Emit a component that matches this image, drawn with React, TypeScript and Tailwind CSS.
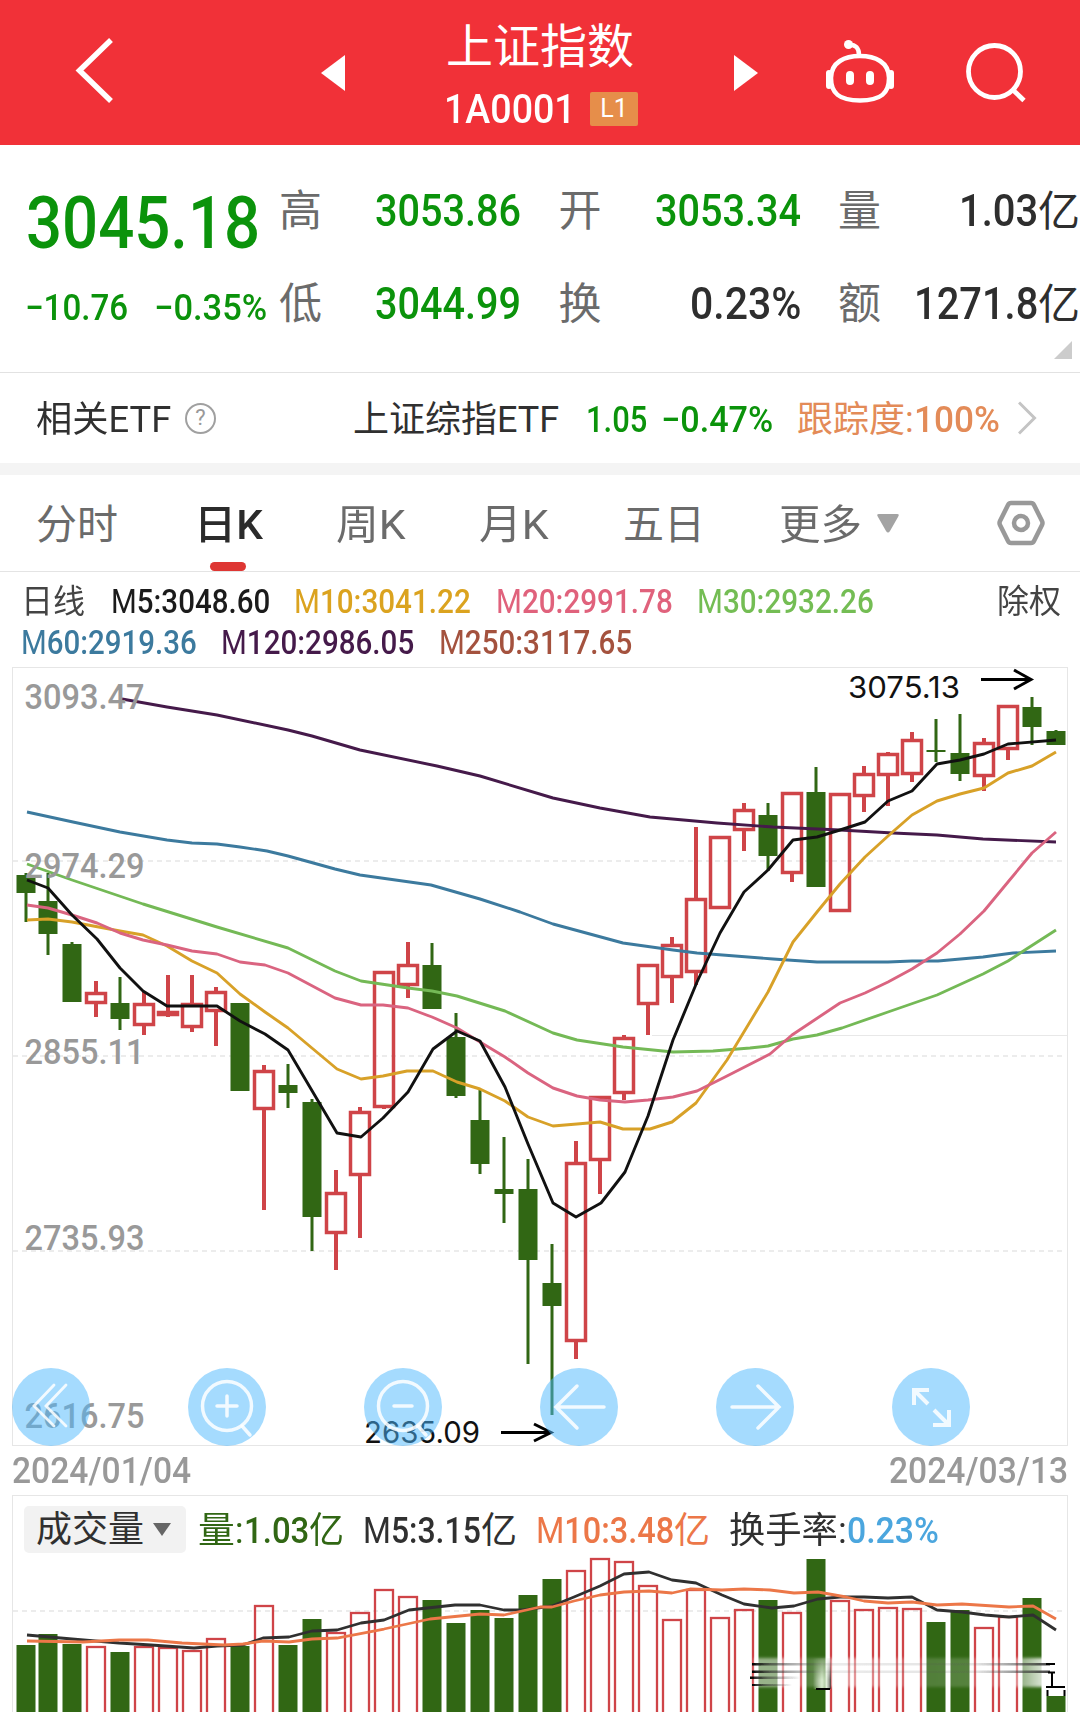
import { useLayoutEffect, useRef, type ReactNode } from "react";

/** Text run condensed or stretched horizontally to occupy exactly `w` pixels. */
function Fit({ w, className = "", children }: { w: number; className?: string; children: ReactNode }) {
  const inner = useRef<HTMLSpanElement>(null);
  useLayoutEffect(() => {
    const el = inner.current;
    if (!el) return;
    el.style.transform = "none";
    el.style.transform = `scaleX(${w / el.offsetWidth})`;
  }, [w]);
  return (
    <span className={`inline-block shrink-0 whitespace-nowrap ${className}`} style={{ width: w }}>
      <span ref={inner} className="inline-block origin-left">
        {children}
      </span>
    </span>
  );
}

type Candle = [high: number, top: number, bottom: number, low: number, up: 0 | 1];

const candles: Candle[] = [
  [873, 875, 893, 922, 0], [873, 901, 934, 955, 0], [942, 944, 1002, 1002, 0], [981, 992, 1004, 1017, 1],
  [977, 1003, 1019, 1030, 0], [992, 1003, 1026, 1035, 1], [975, 1011, 1016, 1017, 1], [975, 1003, 1028, 1032, 1],
  [987, 991, 1012, 1046, 1], [1003, 1003, 1091, 1091, 0], [1065, 1070, 1110, 1210, 1], [1064, 1085, 1093, 1108, 0],
  [1099, 1102, 1217, 1251, 0], [1170, 1192, 1234, 1270, 1], [1107, 1111, 1176, 1238, 1], [971, 971, 1108, 1109, 1],
  [942, 964, 986, 998, 1], [943, 965, 1009, 1009, 0], [1013, 1037, 1096, 1098, 0], [1089, 1120, 1164, 1174, 0],
  [1137, 1189, 1194, 1223, 0], [1159, 1189, 1260, 1364, 0], [1244, 1283, 1306, 1415, 0], [1141, 1162, 1342, 1359, 1],
  [1096, 1096, 1161, 1194, 1], [1035, 1037, 1094, 1100, 1], [964, 964, 1005, 1035, 1], [937, 944, 978, 1003, 1],
  [827, 898, 973, 985, 1], [836, 836, 909, 909, 1], [803, 809, 831, 851, 1], [803, 815, 856, 871, 0],
  [792, 792, 874, 882, 1], [767, 792, 887, 887, 0], [793, 793, 912, 912, 1], [766, 773, 797, 812, 1],
  [752, 753, 776, 806, 1], [732, 739, 775, 782, 1], [719, 750, 752, 762, 0], [714, 753, 774, 781, 0],
  [738, 742, 777, 791, 1], [705, 705, 750, 760, 1], [697, 707, 727, 745, 0], [730, 731, 745, 745, 0],
];

const volumeTops = [
  1645, 1634, 1644, 1646, 1652, 1646, 1647, 1650, 1638, 1646, 1605, 1645, 1619, 1632, 1612, 1589, 1596, 1600, 1623,
  1610, 1618, 1595, 1579, 1570, 1558, 1561, 1585, 1619, 1589, 1617, 1609, 1600, 1612, 1559, 1600, 1609, 1607, 1608,
  1622, 1610, 1627, 1616, 1598, 1696,
];

const averages = [
  { color: "#3c7a9e", points: "27,812 73,822 120,832 167,840 192,843 217,844 240,847 267,851 288,856 335,869 360,875 431,885 480,899 520,912 553,924 623,943 673,950 697,953 773,959 817,962 888,962 912,961 938,961 983,957 1013,953 1056,951" },
  { color: "#451a4a", points: "122,699 167,707 217,715 288,730 312,736 360,750 437,766 480,776 553,798 600,808 650,817 717,823 773,827 840,830 893,833 937,835 983,839 1056,842" },
  { color: "#74b956", points: "27,864 72,880 143,904 217,927 288,948 335,971 361,981 408,988 432,991 457,996 505,1011 553,1033 577,1040 623,1047 673,1052 713,1051 750,1048 768,1046 793,1039 817,1035 842,1028 888,1012 937,995 983,974 1008,961 1056,930" },
  { color: "#d8a128", points: "27,920 48,919 72,922 120,931 143,935 167,946 192,961 217,973 240,994 265,1012 288,1028 337,1069 361,1079 383,1076 407,1071 433,1071 457,1082 480,1089 505,1101 528,1117 553,1126 577,1124 600,1122 623,1129 650,1129 672,1122 696,1103 727,1060 768,992 793,942 817,912 840,884 865,857 888,836 912,815 937,801 960,794 984,788 1008,773 1032,766 1056,752" },
  { color: "#da6480", points: "27,905 48,908 72,915 97,923 120,933 143,940 167,945 192,951 217,954 240,962 265,965 288,973 335,998 361,1005 383,1005 408,1008 432,1017 457,1028 480,1042 505,1057 528,1073 553,1088 577,1096 600,1100 625,1102 648,1100 673,1097 697,1091 725,1077 770,1054 792,1035 840,1003 865,993 888,982 912,969 937,953 960,934 984,911 1008,882 1032,853 1056,832" },
  { color: "#111111", points: "27,880 48,888 72,915 97,939 120,968 143,991 167,1006 217,1006 240,1021 265,1034 288,1050 337,1133 361,1137 383,1118 408,1092 433,1049 457,1031 480,1041 505,1087 528,1144 553,1203 576,1217 601,1203 625,1172 648,1116 673,1040 697,982 720,933 744,892 768,870 793,840 817,837 840,830 865,822 888,801 912,791 937,764 960,760 984,754 1008,744 1056,740" },
];

const priceLabels = [
  { y: 709, text: "3093.47" },
  { y: 878, text: "2974.29" },
  { y: 1064, text: "2855.11" },
  { y: 1250, text: "2735.93" },
  { y: 1428, text: "2616.75" },
];

const RED = "#cf4448";
const GREEN = "#316714";
const candleX = (i: number) => (i === 0 ? 26 : 24 + i * 24);

function PriceChart() {
  return (
    <svg className="block h-[777px] w-[1054px] overflow-visible" viewBox="13 668 1054 777">
      {[861, 1056, 1251].map((y) => (
        <line key={y} x1="13" x2="1066" y1={y} y2={y} stroke="#e6e6e6" strokeWidth="1.5" strokeDasharray="5 4" />
      ))}
      <line x1="652" x2="1067" y1="1035.5" y2="1035.5" stroke="#e8e8e8" />
      {candles.map(([high, top, bottom, low, up], i) => {
        const x = candleX(i);
        const flat = bottom - top < 6;
        return up ? (
          <g key={i} stroke={RED}>
            <path d={`M${x} ${high}V${top + 1}M${x} ${bottom - 1}V${low}`} strokeWidth="4" />
            <rect x={x - 9.5} y={top + 1.5} width="19" height={bottom - top - 3} fill={flat ? RED : "none"} strokeWidth="3.5" />
          </g>
        ) : (
          <g key={i} fill={GREEN}>
            <rect x={x - 1.5} y={high} width="3" height={low - high} />
            <rect x={x - 9.5} y={top} width="19" height={bottom - top} />
          </g>
        );
      })}
      {averages.map((line) => (
        <polyline key={line.color} points={line.points} fill="none" stroke={line.color} strokeWidth="2.9" strokeLinejoin="round" />
      ))}
      <g className="font-['Roboto']" fontSize="35.5" fontWeight="500" fill="#999999">
        {priceLabels.map((label) => (
          <text key={label.y} x="24.5" y={label.y} textLength="120" lengthAdjust="spacingAndGlyphs">
            {label.text}
          </text>
        ))}
      </g>
      <g className="font-['Inter']" fontSize="30" fill="#111111">
        <text x="848" y="698" textLength="112" lengthAdjust="spacingAndGlyphs">3075.13</text>
        <text x="364" y="1443" textLength="116" lengthAdjust="spacingAndGlyphs">2635.09</text>
      </g>
      <g fill="none" stroke="#000000" strokeWidth="3">
        <path d="M981 679.500H1030M1014 670L1031 679.500L1014 689" />
        <path d="M501 1432.500H551M534 1424L551 1432.500L534 1441" />
      </g>
    </svg>
  );
}

function VolumeChart() {
  return (
    <svg className="block h-[155px] w-[1054px]" viewBox="13 1557 1054 155">
      <defs>
        <linearGradient id="haze" x1="0" x2="1" y1="0" y2="0">
          <stop offset="0" stopColor="#fff" stopOpacity="0.5" />
          <stop offset="0.1" stopColor="#fff" stopOpacity="0.5" />
          <stop offset="0.18" stopColor="#fff" stopOpacity="0.15" />
          <stop offset="0.3" stopColor="#fff" stopOpacity="0.5" />
          <stop offset="0.55" stopColor="#fff" stopOpacity="0.15" />
          <stop offset="0.86" stopColor="#fff" stopOpacity="0.2" />
          <stop offset="1" stopColor="#fff" stopOpacity="0.85" />
        </linearGradient>
        <linearGradient id="streak" x1="0" x2="1" y1="0" y2="0">
          <stop offset="0" stopColor="#000" stopOpacity="1" />
          <stop offset="0.06" stopColor="#222" stopOpacity="0.6" />
          <stop offset="0.25" stopColor="#555" stopOpacity="0.12" />
          <stop offset="0.75" stopColor="#555" stopOpacity="0.15" />
          <stop offset="1" stopColor="#222" stopOpacity="0.85" />
        </linearGradient>
        <linearGradient id="streakShort" x1="0" x2="1" y1="0" y2="0">
          <stop offset="0" stopColor="#000" stopOpacity="1" />
          <stop offset="0.35" stopColor="#222" stopOpacity="0.5" />
          <stop offset="1" stopColor="#222" stopOpacity="0" />
        </linearGradient>
        <linearGradient id="glow" x1="0" x2="1" y1="0" y2="0">
          <stop offset="0" stopColor="#fff" stopOpacity="0" />
          <stop offset="0.5" stopColor="#e3f3da" stopOpacity="0.9" />
          <stop offset="0.75" stopColor="#c9e0bd" stopOpacity="0.6" />
          <stop offset="1" stopColor="#222" stopOpacity="0.75" />
        </linearGradient>
        <linearGradient id="fade" x1="0" x2="0" y1="0" y2="1">
          <stop offset="0" stopColor="#000" />
          <stop offset="0.7" stopColor="#fff" />
        </linearGradient>
        <mask id="fadeIn">
          <rect x="805" y="1656" width="35" height="34" fill="url(#fade)" />
        </mask>
        <filter id="soft" x="-5%" y="-30%" width="110%" height="160%">
          <feGaussianBlur stdDeviation="1.5" />
        </filter>
        <filter id="fine" x="-5%" y="-100%" width="110%" height="300%">
          <feGaussianBlur stdDeviation="0.7" />
        </filter>
      </defs>
      <line x1="13" x2="1066" y1="1611" y2="1611" stroke="#e6e6e6" strokeWidth="1.500" strokeDasharray="5 4" />
      {volumeTops.map((y, i) => {
        const x = candleX(i);
        return candles[i][4] ? (
          <rect key={i} x={x - 9} y={y + 1} width="18" height={1720 - y} fill="none" stroke={RED} strokeWidth="2.3" />
        ) : (
          <rect key={i} x={x - 9.5} y={y} width="19" height={1712 - y} fill={GREEN} />
        );
      })}
      <g fill="none" strokeWidth="2.8" strokeLinejoin="round">
        <polyline
          stroke="#303030"
          points="27,1635 72,1639 119,1643 151,1645 194,1648 217,1646 243,1645 263,1638 289,1637 312,1631 337,1630 361,1623 384,1620 409,1610 455,1605 480,1605 504,1610 523,1610 552,1606 574,1597 600,1586 624,1574 649,1572 672,1580 696,1583 722,1595 744,1604 772,1608 794,1606 818,1599 840,1597 864,1597 888,1598 912,1597 937,1610 962,1612 985,1615 1009,1617 1033,1615 1056,1630"
        />
        <polyline
          stroke="#ec7748"
          points="27,1641 83,1642 119,1640 148,1640 182,1643 224,1645 243,1644 263,1641 289,1642 312,1639 337,1638 384,1629 430,1619 480,1614 504,1615 540,1607 552,1607 574,1601 600,1595 624,1592 649,1591 672,1593 690,1589 722,1590 744,1589 770,1590 794,1593 818,1592 846,1597 864,1601 888,1603 912,1602 937,1605 962,1604 1009,1607 1033,1606 1056,1619"
        />
      </g>
      <rect x="754" y="1658" width="290" height="29" fill="url(#haze)" filter="url(#soft)" />
      <g fill="url(#streak)" filter="url(#fine)">
        <rect x="752" y="1663" width="298" height="2.500" />
        <rect x="752" y="1670.500" width="298" height="2.500" />
      </g>
      <g fill="url(#streakShort)" filter="url(#fine)">
        <rect x="750" y="1676.500" width="50" height="2.500" />
        <rect x="752" y="1684" width="40" height="2" />
      </g>
      <g mask="url(#fadeIn)">
        <rect x="813" y="1658" width="18" height="31" fill="url(#glow)" filter="url(#fine)" />
      </g>
      <path
        d="M816 1689H830M1046 1664H1055M1048 1672.500H1055M1052 1672V1686M1046 1687H1065M1047.500 1690V1696M1064.500 1690V1696"
        fill="none"
        stroke="#000"
        strokeWidth="2"
      />
    </svg>
  );
}

function RoundButton({ children }: { children: ReactNode }) {
  return (
    <button className="size-[78px] shrink-0 rounded-full bg-[#4bb7fd]/50">
      <svg className="block size-[78px]" viewBox="0 0 78 78" fill="none" stroke="#ffffff" strokeWidth="3.5" strokeOpacity="0.85" strokeLinecap="round">
        {children}
      </svg>
    </button>
  );
}

function ChartControls() {
  return (
    <div className="absolute -bottom-px -left-px flex gap-[98px]">
      <RoundButton>
        <path d="M42 17L22 38L42 58M54 17L34 38L54 58" strokeWidth="2.8" />
      </RoundButton>
      <RoundButton>
        <circle cx="39" cy="38" r="24.500" />
        <path d="M29 38H49M39 28V48M54 58L62 67" />
      </RoundButton>
      <RoundButton>
        <circle cx="39" cy="38" r="24.500" />
        <path d="M30 38H48M54 58L62 67" />
      </RoundButton>
      <RoundButton>
        <path d="M64 39H16M37 18L16 39L37 60" />
      </RoundButton>
      <RoundButton>
        <path d="M16 39H63M42 18L63 39L42 60" />
      </RoundButton>
      <RoundButton>
        <path d="M37 22H22V37M22 22L36 36M42 42L56 56M41 57H57V42" strokeWidth="4" strokeLinecap="butt" />
      </RoundButton>
    </div>
  );
}

function Header() {
  return (
    <header className="flex h-[145px] bg-[#f13138] text-white">
      <svg className="mt-[34px] ml-[70px] h-[74px] w-[48px] shrink-0" viewBox="70 34 48 74" fill="none" stroke="#fff" strokeWidth="5.500">
        <path d="M111 40L79.500 70.500L111 101" />
      </svg>
      <svg className="mt-[55px] ml-[203px] h-[36px] w-[24px] shrink-0" viewBox="0 0 24 36" fill="#fff">
        <path d="M24 0V36L0 18Z" />
      </svg>
      <div className="ml-[101px] w-[200px] shrink-0 pt-[18px]">
        <div className="h-[59px] text-[47px] leading-[58px]">
          <Fit w={188}>上证指数</Fit>
        </div>
        <div className="flex h-[64px] items-center text-[41px] leading-[64px]">
          <Fit w={132} className="-ml-[2px] font-medium">1A0001</Fit>
          <span className="ml-[14px] flex h-[34px] w-[48px] items-center justify-center rounded-[2px] bg-[#e68e4a] text-[25px]">
            L1
          </span>
        </div>
      </div>
      <svg className="mt-[55px] ml-[88px] h-[36px] w-[24px] shrink-0" viewBox="0 0 24 36" fill="#fff">
        <path d="M0 0V36L24 18Z" />
      </svg>
      <svg className="mt-[36px] ml-[65px] h-[70px] w-[76px] shrink-0" viewBox="824 36 76 70" fill="none" stroke="#fff" strokeWidth="4.500">
        <path d="M861 56C876 56 890 62 890 78C890 93 882 100.500 861 100.500C840 100.500 832 93 832 78C832 62 846 56 861 56Z" />
        <path d="M860 55C860 48 857 45 850 44.500" />
        <circle cx="849.500" cy="44.500" r="4.500" fill="#fff" stroke="none" />
        <path d="M830 73V86M892 73V86" strokeWidth="6" strokeLinecap="round" />
        <path d="M851 75V81M871 75V81" strokeWidth="8" strokeLinecap="round" />
      </svg>
      <svg className="mt-[36px] ml-[63px] h-[70px] w-[68px] shrink-0" viewBox="962 36 68 70" fill="none" stroke="#fff" strokeWidth="4.800">
        <circle cx="994.500" cy="71.500" r="26" />
        <path d="M1013 90L1024 100.500" />
      </svg>
    </header>
  );
}

function Stat({ label, children }: { label: string; children: ReactNode }) {
  return (
    <div className="flex h-[93px] items-baseline justify-between text-[45px] leading-[93px]">
      <span className="text-[43px] text-[#6b6b6b]">{label}</span>
      <span className="flex items-baseline">{children}</span>
    </div>
  );
}

function Summary() {
  return (
    <section className="relative flex h-[228px] border-b border-[#e2e2e2]">
      <div className="w-[279px] shrink-0 pl-[26px] text-[#0b930b]">
        <div className="h-[117px] pt-[19px] text-[73px] leading-[118px]">
          <Fit w={234} className="font-medium">3045.18</Fit>
        </div>
        <div className="flex h-[92px] text-[36px] leading-[92px]">
          <Fit w={103} className="-ml-px font-medium">−10.76</Fit>
          <Fit w={113} className="ml-[26px] font-medium">−0.35%</Fit>
        </div>
      </div>
      <div className="mt-[19px] grid flex-1 grid-cols-3 content-start gap-x-[37.5px] text-[#2e2e2e]">
        <Stat label="高"><Fit w={146} className="font-medium text-[#0b930b]">3053.86</Fit></Stat>
        <Stat label="开"><Fit w={146} className="font-medium text-[#0b930b]">3053.34</Fit></Stat>
        <Stat label="量"><Fit w={79} className="font-medium">1.03</Fit><span className="text-[42px]">亿</span></Stat>
        <Stat label="低"><Fit w={146} className="font-medium text-[#0b930b]">3044.99</Fit></Stat>
        <Stat label="换"><Fit w={111} className="font-medium">0.23%</Fit></Stat>
        <Stat label="额"><Fit w={124} className="font-medium">1271.8</Fit><span className="text-[42px]">亿</span></Stat>
      </div>
      <svg className="absolute right-[8px] bottom-[13px] h-[18px] w-[18px]" viewBox="0 0 18 18" fill="#cccccc">
        <path d="M18 0V18H0Z" />
      </svg>
    </section>
  );
}

function EtfRow() {
  return (
    <section className="flex h-[90px] items-baseline text-[36px] leading-[94px] text-[#303030]">
      <Fit w={135} className="ml-[36px]">相关ETF</Fit>
      <span className="ml-[14px] flex size-[31px] items-center justify-center self-center rounded-full border-2 border-[#a0a0a0] text-[22px] leading-none text-[#999999]">
        ?
      </span>
      <Fit w={206} className="ml-[137px]">上证综指ETF</Fit>
      <Fit w={61} className="ml-[27px] font-medium text-[#0b930b]">1.05</Fit>
      <Fit w={112} className="ml-[14px] font-medium text-[#0b930b]">−0.47%</Fit>
      <Fit w={117} className="ml-[24px] text-[#e38b58]">跟踪度:</Fit>
      <Fit w={86} className="font-medium text-[#e38b58]">100%</Fit>
      <svg className="ml-[18px] h-[34px] w-[20px] self-center" viewBox="0 0 20 34" fill="none" stroke="#c4c4c4" strokeWidth="3">
        <path d="M1 1.500L16.500 17L1 32.500" />
      </svg>
    </section>
  );
}

function Tabs() {
  return (
    <nav className="flex h-[97px] items-baseline border-b border-[#e4e4e4] text-[41px] leading-[101px] text-[#6b6b6b]">
      <Fit w={82} className="ml-[36px]">分时</Fit>
      <span className="relative ml-[76px] h-[97px] text-[#2b2b2b]">
        <Fit w={69} className="font-medium">日K</Fit>
        <span className="absolute bottom-px left-[16px] h-[9px] w-[36px] rounded-[5px] bg-[#de3633]" />
      </span>
      <Fit w={70} className="ml-[73px]">周K</Fit>
      <Fit w={70} className="ml-[73px]">月K</Fit>
      <Fit w={82} className="ml-[74px]">五日</Fit>
      <Fit w={83} className="ml-[74px]">更多</Fit>
      <svg className="ml-[15px] h-[19px] w-[22px] self-center" viewBox="0 0 22 19" fill="#a3a3a3">
        <path d="M2 0H20Q23 0 21 3L13 17Q11 20 9 17L1 3Q-1 0 2 0Z" />
      </svg>
      <svg className="ml-[97px] h-[46px] w-[50px] self-center" viewBox="0 0 50 46" fill="none" stroke="#999999" strokeWidth="4.500" strokeLinejoin="round">
        <path d="M15 3H35Q37 3 38 5L46 21Q47 23 46 25L38 41Q37 43 35 43H15Q13 43 12 41L4 25Q3 23 4 21L12 5Q13 3 15 3Z" />
        <circle cx="25" cy="23" r="7" />
      </svg>
    </nav>
  );
}

function Legend() {
  return (
    <section className="h-[95px] pt-[10px] text-[32.5px] leading-[41px]">
      <div className="flex h-[41px] items-baseline">
        <Fit w={64} className="ml-[21px] text-[#444444]">日线</Fit>
        <Fit w={159} className="ml-[26px] font-medium text-[#1b1b1b]"><span className="font-normal">M</span>5:3048.60</Fit>
        <Fit w={177} className="ml-[24px] font-medium text-[#dba31f]"><span className="font-normal">M</span>10:3041.22</Fit>
        <Fit w={177} className="ml-[25px] font-medium text-[#e0627c]"><span className="font-normal">M</span>20:2991.78</Fit>
        <Fit w={177} className="ml-[24px] font-medium text-[#74bd54]"><span className="font-normal">M</span>30:2932.26</Fit>
        <Fit w={64} className="ml-[123px] text-[#444444]">除权</Fit>
      </div>
      <div className="flex h-[41px] items-baseline">
        <Fit w={176} className="ml-[21px] font-medium text-[#3c7a9e]"><span className="font-normal">M</span>60:2919.36</Fit>
        <Fit w={193} className="ml-[24px] font-medium text-[#451a4a]"><span className="font-normal">M</span>120:2986.05</Fit>
        <Fit w={193} className="ml-[25px] font-medium text-[#a4523e]"><span className="font-normal">M</span>250:3117.65</Fit>
      </div>
    </section>
  );
}

function VolumeHeader() {
  return (
    <div className="flex h-[61px] items-start pt-[10px] text-[36px] leading-[50px] text-[#303030]">
      <button className="ml-[11px] flex h-[47px] w-[162px] items-center rounded-[5px] bg-[#f2f2f2] pl-[12px]">
        <Fit w={108} className="pt-px">成交量</Fit>
        <svg className="ml-[9px] h-[13px] w-[18px]" viewBox="0 0 18 13" fill="#666666">
          <path d="M0 0H18L9 13Z" />
        </svg>
      </button>
      <div className="flex items-baseline">
        <Fit w={46} className="ml-[12px] text-[#316714]">量:</Fit>
        <Fit w={65} className="font-medium text-[#316714]">1.03</Fit>
        <Fit w={35} className="text-[#316714]">亿</Fit>
        <Fit w={118} className="ml-[19px] font-medium"><span className="font-normal">M</span>5:3.15</Fit>
        <Fit w={36}>亿</Fit>
        <Fit w={138} className="ml-[19px] font-medium text-[#ec7748]"><span className="font-normal">M</span>10:3.48</Fit>
        <Fit w={36} className="text-[#ec7748]">亿</Fit>
        <Fit w={118} className="ml-[19px]">换手率:</Fit>
        <Fit w={92} className="font-medium text-[#4ba6de]">0.23%</Fit>
      </div>
    </div>
  );
}

export default function App() {
  return (
    <main className="h-[1712px] w-[1080px] overflow-hidden bg-white font-['Roboto','Noto_Sans_CJK_SC',sans-serif]">
      <Header />
      <Summary />
      <EtfRow />
      <div className="h-[12px] bg-[#f4f4f4]" />
      <Tabs />
      <Legend />
      <section className="relative ml-[12px] w-[1056px] border border-[#e6e6e6]">
        <PriceChart />
        <ChartControls />
      </section>
      <div className="flex h-[49px] justify-between pr-[12px] pl-[12px] text-[37px] leading-[50px] font-medium text-[#999999]">
        <Fit w={179}>2024/01/04</Fit>
        <Fit w={179}>2024/03/13</Fit>
      </div>
      <section className="ml-[12px] w-[1056px] border-x border-t border-[#e6e6e6]">
        <VolumeHeader />
        <VolumeChart />
      </section>
    </main>
  );
}
